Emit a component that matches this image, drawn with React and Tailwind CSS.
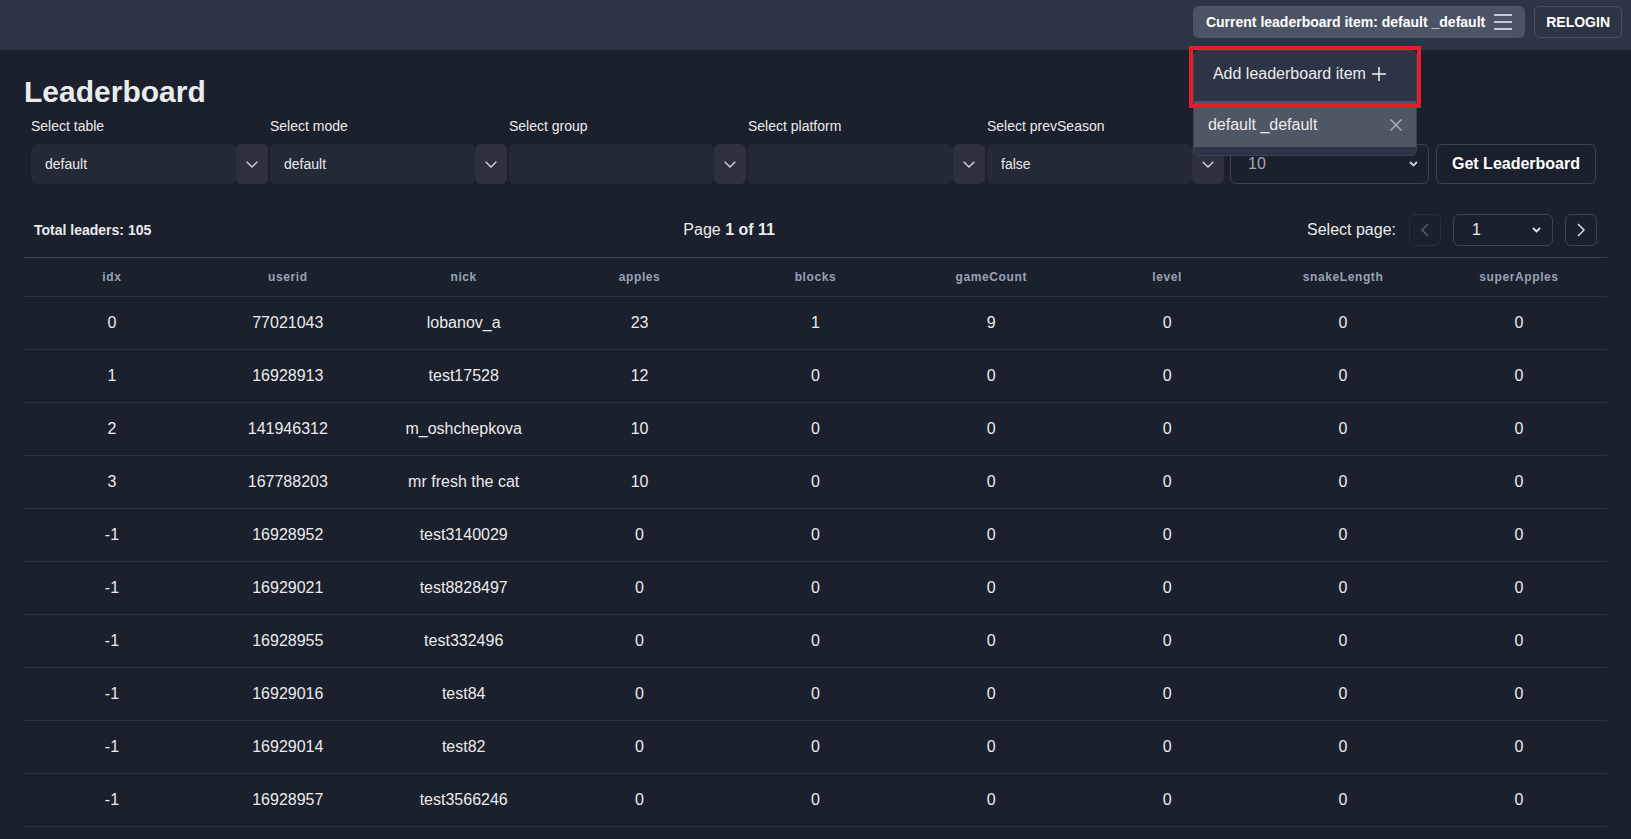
import { useState } from 'react'

const columns = ['idx', 'userid', 'nick', 'apples', 'blocks', 'gameCount', 'level', 'snakeLength', 'superApples']

const rows = [
  [0, 77021043, 'lobanov_a', 23, 1, 9, 0, 0, 0],
  [1, 16928913, 'test17528', 12, 0, 0, 0, 0, 0],
  [2, 141946312, 'm_oshchepkova', 10, 0, 0, 0, 0, 0],
  [3, 167788203, 'mr fresh the cat', 10, 0, 0, 0, 0, 0],
  [-1, 16928952, 'test3140029', 0, 0, 0, 0, 0, 0],
  [-1, 16929021, 'test8828497', 0, 0, 0, 0, 0, 0],
  [-1, 16928955, 'test332496', 0, 0, 0, 0, 0, 0],
  [-1, 16929016, 'test84', 0, 0, 0, 0, 0, 0],
  [-1, 16929014, 'test82', 0, 0, 0, 0, 0, 0],
  [-1, 16928957, 'test3566246', 0, 0, 0, 0, 0, 0]
]

const filters = [
  { label: 'Select table', value: 'default' },
  { label: 'Select mode', value: 'default' },
  { label: 'Select group', value: '' },
  { label: 'Select platform', value: '' },
  { label: 'Select prevSeason', value: 'false' }
]

function ChevronThin() {
  return (
    <svg width="12" height="7" viewBox="0 0 12 7" fill="none" stroke="#cfd2d8" strokeWidth="1.4">
      <path d="M0.7 0.7 6 6 11.3 0.7" />
    </svg>
  )
}

function ChevronSmall({ color = '#e2e4e8' }) {
  return (
    <svg width="9" height="6" viewBox="0 0 9 6" fill="none" stroke={color} strokeWidth="1.8">
      <path d="M1 1 4.5 4.5 8 1" />
    </svg>
  )
}

function Hamburger() {
  return (
    <svg width="18" height="16" viewBox="0 0 18 16" fill="none" stroke="#eef0f3" strokeWidth="1.4">
      <path d="M0 1h18M0 8h18M0 15h18" />
    </svg>
  )
}

function FilterSelect({ label, value }) {
  return (
    <div className="flex w-[237px] flex-col">
      <label className="mb-2 text-[14px] leading-5">{label}</label>
      <div className="flex h-10">
        <div className="flex w-[205px] items-center rounded-md bg-[#232935] pl-[14px] text-[14px]">
          {value}
        </div>
        <div className="flex w-8 items-center justify-center rounded-md bg-[#2c313d]">
          <ChevronThin />
        </div>
      </div>
    </div>
  )
}

function LeaderboardMenu() {
  return (
    <>
      <div className="absolute left-0 top-[44px] z-10 w-[224px] rounded-md border border-[#3b4252] bg-[#2d3445] pb-2">
        <div className="flex h-[50px] items-start gap-[6px] pl-[19px] pt-[11px] text-[16px] leading-6">
          Add leaderboard item
          <svg className="mt-[5px]" width="14" height="14" viewBox="0 0 14 14" fill="none" stroke="#eef0f3" strokeWidth="1.5">
            <path d="M7 0v14M0 7h14" />
          </svg>
        </div>
        <div className="h-px bg-[#4a5163]" />
        <div className="flex h-[45px] items-center justify-between bg-[#4f5765] px-[14px] text-[16px]">
          default _default
          <svg width="12" height="12" viewBox="0 0 12 12" fill="none" stroke="#a9aeb7" strokeWidth="1.5">
            <path d="M0.5 0.5l11 11M11.5 0.5l-11 11" />
          </svg>
        </div>
      </div>
      <div className="pointer-events-none absolute left-[-4px] top-[40px] z-20 h-[62px] w-[232px] border-[4px] border-[#e3202a]" />
    </>
  )
}

export default function App() {
  const [page] = useState(1)

  return (
    <div className="min-h-screen bg-[#1a202c] pb-6 font-['Liberation_Sans',Arial,sans-serif] text-[#ebebec]">
      <header className="flex h-[50px] items-start justify-end gap-[9px] bg-[#2d3443] pr-[9px] pt-[6px]">
        <div className="relative">
          <button className="flex h-8 items-center gap-[9px] rounded-md bg-[#4b5364] px-[13px] text-[14px] font-bold text-white">
            Current leaderboard item: default _default
            <Hamburger />
          </button>
          <LeaderboardMenu />
        </div>
        <button className="h-8 rounded-md border border-[#485061] px-[11px] text-[14px] font-bold text-white">
          RELOGIN
        </button>
      </header>

      <main className="px-6 pt-[24px]">
        <h1 className="text-[30px] font-bold leading-[36px]">Leaderboard</h1>

        <div className="mt-[6px] flex items-end gap-[2px] pl-[7px]">
          {filters.map((f) => (
            <FilterSelect key={f.label} label={f.label} value={f.value} />
          ))}
          <div className="ml-[4px] flex h-10 w-[199px] items-center justify-between rounded-md border border-[#3d424e] pl-[17px] pr-[10px] text-[16px] text-[#a3a8b1]">
            10
            <ChevronSmall color="#c9ccd2" />
          </div>
          <button className="ml-[5px] h-10 w-[160px] rounded-md border border-[#3d424e] text-[16px] font-bold text-white">
            Get Leaderboard
          </button>
        </div>

        <div className="mt-[30px] flex h-8 items-center justify-between px-[10px]">
          <span className="text-[14px] font-bold">Total leaders: 105</span>
          <span className="text-[16px]">
            Page <b>{page} of 11</b>
          </span>
          <div className="flex items-center">
            <span className="mr-[13px] text-[16px]">Select page:</span>
            <button className="flex h-8 w-8 items-center justify-center rounded-md border border-[#2a2f3b]">
              <svg width="8" height="14" viewBox="0 0 8 14" fill="none" stroke="#5d626d" strokeWidth="1.4">
                <path d="M7 1 1 7l6 6" />
              </svg>
            </button>
            <div className="ml-3 flex h-8 w-[100px] items-center justify-between rounded-md border border-[#3d424e] pl-[18px] pr-[11px] text-[16px]">
              1
              <ChevronSmall />
            </div>
            <button className="ml-3 flex h-8 w-8 items-center justify-center rounded-md border border-[#3d424e]">
              <svg width="8" height="14" viewBox="0 0 8 14" fill="none" stroke="#e6e8ec" strokeWidth="1.4">
                <path d="M1 1l6 6-6 6" />
              </svg>
            </button>
          </div>
        </div>

        <table className="mt-[11px] w-full table-fixed border-collapse">
          <thead>
            <tr className="border-y border-t-[#3b404c] border-b-[#2d3340]">
              {columns.map((c) => (
                <th key={c} className="h-[39px] text-center text-[12px] font-bold tracking-wider text-[#98a2b4]">
                  {c}
                </th>
              ))}
            </tr>
          </thead>
          <tbody>
            {rows.map((r, i) => (
              <tr key={i} className="border-b border-[#2d3340]">
                {r.map((v, j) => (
                  <td key={j} className="h-[53px] text-center text-[16px]">
                    {v}
                  </td>
                ))}
              </tr>
            ))}
          </tbody>
        </table>
      </main>
    </div>
  )
}
